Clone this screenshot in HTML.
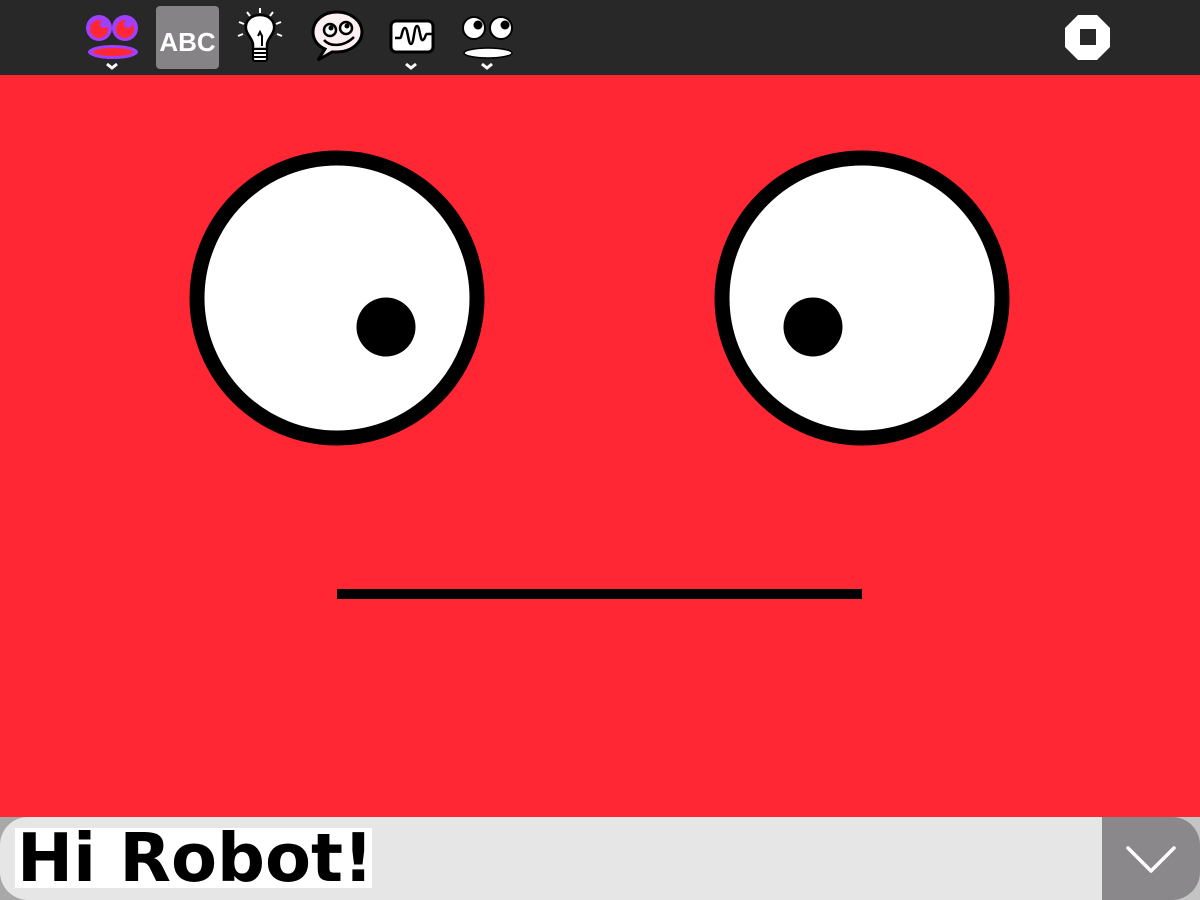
<!DOCTYPE html>
<html><head><style>
body{margin:0;width:1200px;height:900px;overflow:hidden;background:#ff2733;position:relative;font-family:"DejaVu Sans","Liberation Sans",sans-serif}
.top{position:absolute;left:0;top:0;width:1200px;height:75px;background:#282828}
.bot{position:absolute;left:0;top:817px;width:1200px;height:83px;background:#a8a8a8}
.inp{position:absolute;left:0;top:817px;width:1130px;height:83px;background:#e6e6e6;border-radius:28px 0 0 28px}
.btnbg{position:absolute;left:1102px;top:817px;width:98px;height:83px;background:#c4c4c4}
.btn{position:absolute;left:1102px;top:817px;width:98px;height:83px;background:#8a888a;border-radius:0 28px 28px 0}
.txt{position:absolute;left:15px;top:828px;width:357px;height:60px;background:#fff;font-weight:bold;font-size:67px;line-height:60px;color:#000;padding-left:2px;box-sizing:border-box;white-space:nowrap;overflow:hidden}
</style></head><body>
<div class="top"></div>
<svg style="position:absolute;left:0;top:0" width="1200" height="900">
<circle cx="99" cy="28" r="13" fill="#a040ff"/><circle cx="125" cy="28" r="13" fill="#a040ff"/>
<circle cx="99" cy="29" r="9" fill="#ff2733"/><circle cx="125" cy="29" r="9" fill="#ff2733"/>
<circle cx="104" cy="24" r="4" fill="#a040ff"/><circle cx="128" cy="24" r="4" fill="#a040ff"/>
<ellipse cx="113" cy="52" rx="25" ry="7" fill="#a040ff"/><ellipse cx="113" cy="52" rx="20" ry="4" fill="#ff2733"/>
<path d="M107 64l5 4 5-4" stroke="#fff" stroke-width="3" fill="none"/>
<rect x="156" y="6" width="63" height="63" rx="4" fill="#858385"/>
<text x="187.5" y="51" text-anchor="middle" font-family="Liberation Sans" font-weight="bold" font-size="26" fill="#fff">ABC</text>
<g stroke="#fff" stroke-width="2"><line x1="260" y1="13" x2="260" y2="8"/><line x1="250" y1="16" x2="247" y2="12"/><line x1="270" y1="16" x2="273" y2="12"/><line x1="244" y1="24" x2="239" y2="22"/><line x1="276" y1="24" x2="281" y2="22"/><line x1="243" y1="34" x2="238" y2="36"/><line x1="277" y1="34" x2="282" y2="36"/></g>
<path d="M260 15c-10 0-15 7-14 14 1 6 6 9 7 15v5h14v-5c1-6 6-9 7-15 1-7-4-14-14-14z" fill="#fff" stroke="#000" stroke-width="2.5"/>
<rect x="253" y="49" width="14" height="12" rx="2" fill="#fff" stroke="#000" stroke-width="2"/>
<path d="M254 53h12M254 57h12M258 36l2-4 2 4v10" stroke="#000" stroke-width="2" fill="none"/>
<path d="M337 12c-14 0-24 9-24 20 0 8 5 14 12 17l-7 11 14-8c2 0 3 0 5 0 14 0 25-9 25-20s-11-20-25-20z" fill="#fdf0f3" stroke="#000" stroke-width="3"/>
<circle cx="330" cy="30" r="6" fill="#fff" stroke="#000" stroke-width="2.5"/><circle cx="346" cy="28" r="6" fill="#fff" stroke="#000" stroke-width="2.5"/>
<circle cx="331" cy="28" r="2.5"/><circle cx="347" cy="26" r="2.5"/>
<path d="M324 40c6 7 20 7 30 -3" stroke="#000" stroke-width="2.5" fill="none"/>
<rect x="391" y="21" width="42" height="31" rx="5" fill="#fff" stroke="#000" stroke-width="3"/>
<path d="M395 38h5c2 0 2-10 5-10s3 16 6 16 3-18 6-18 3 16 6 14 2-6 4-6h5" stroke="#000" stroke-width="2.5" fill="none"/>
<path d="M406 64l5 4 5-4" stroke="#fff" stroke-width="3" fill="none"/>
<circle cx="474" cy="28" r="11" fill="#fff" stroke="#000" stroke-width="2"/><circle cx="501" cy="28" r="11" fill="#fff" stroke="#000" stroke-width="2"/>
<circle cx="478" cy="25" r="4.5"/><circle cx="505" cy="25" r="4.5"/>
<ellipse cx="488" cy="53" rx="24" ry="5" fill="#fff" stroke="#000" stroke-width="1.5"/>
<path d="M482 64l5 4 5-4" stroke="#fff" stroke-width="3" fill="none"/>
<polygon points="1078,15 1097,15 1110,28 1110,47 1097,60 1078,60 1065,47 1065,28" fill="#fff"/>
<rect x="1080" y="29" width="16" height="16" fill="#282828"/>
<circle cx="337" cy="298" r="140" fill="#fff" stroke="#000" stroke-width="15"/>
<circle cx="862" cy="298" r="140" fill="#fff" stroke="#000" stroke-width="15"/>
<circle cx="386" cy="327" r="29.5"/><circle cx="813" cy="327" r="29.5"/>
<rect x="337" y="589" width="525" height="10"/>
</svg>
<div class="bot"></div><div class="inp"></div><div class="btnbg"></div><div class="btn"></div>
<svg style="position:absolute;left:1102px;top:817px" width="98" height="83"><path d="M26 31l23 23 23-23" stroke="#fff" stroke-width="3.5" fill="none" stroke-linecap="round" stroke-linejoin="round"/></svg>
<div class="txt">Hi Robot!</div>
</body></html>
